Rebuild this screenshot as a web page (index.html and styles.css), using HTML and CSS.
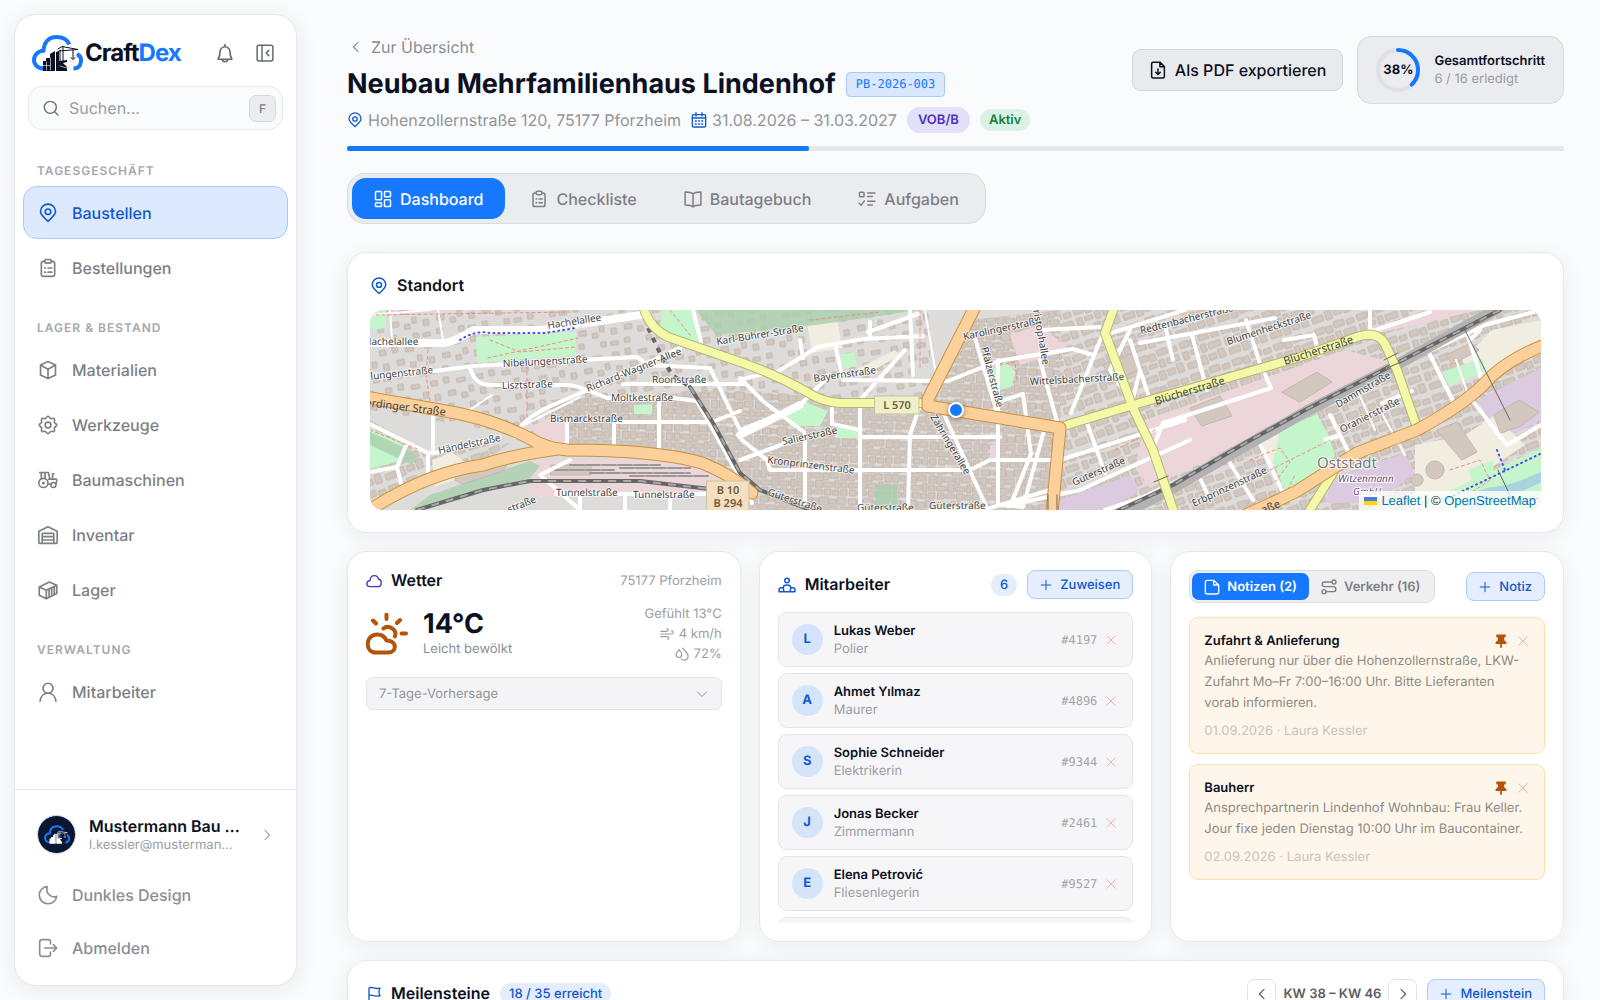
FILE: index.html
```html
<!DOCTYPE html>
<html lang="de">
<head>
<meta charset="utf-8">
<meta name="viewport" content="width=device-width, initial-scale=1">
<title>CraftDex – Neubau Mehrfamilienhaus Lindenhof</title>
<link rel="stylesheet" href="styles.css">
</head>
<body>
<svg class="sprite" aria-hidden="true">
  <symbol id="pin" viewBox="0 0 24 24"><path d="M12 22C8.500 18.500 3 14.800 3 10.300a9 9 0 0 1 18 0C21 14.800 15.500 18.500 12 22Z"/><circle cx="12" cy="10.500" r="3.300"/></symbol>
  <symbol id="clipboard" viewBox="0 0 24 24"><path d="M8 4H6.500A2.500 2.500 0 0 0 4 6.500v13A2.500 2.500 0 0 0 6.500 22h11a2.500 2.500 0 0 0 2.500-2.500v-13A2.500 2.500 0 0 0 17.500 4H16"/><path d="M8 4c0-1.200 1-2.200 2.200-2.200h3.600C15 1.800 16 2.800 16 4s-1 2.200-2.200 2.200h-3.600C9 6.200 8 5.200 8 4ZM8 12h1M12 12h4.500M8 17h1M12 17h4.500"/></symbol>
  <symbol id="box" viewBox="0 0 24 24"><path d="M12 1.800 21 6v12l-9 4.200L3 18V6ZM3.500 6.300 12 11l8.500-4.700M12 11v11"/></symbol>
  <symbol id="gear" viewBox="0 0 24 24"><path d="M12 1.500c1.500 0 1.800 2.300 3.300 2.800s3-1 4.200.2-.3 2.700.2 4.200 2.800 1.800 2.800 3.300-2.300 1.800-2.800 3.300 1 3-.2 4.200-2.700-.3-4.200.2-1.800 2.800-3.300 2.800-1.800-2.300-3.300-2.800-3 1-4.200-.2.300-2.700-.2-4.200S1.500 13.500 1.500 12s2.300-1.800 2.800-3.300-1-3 .2-4.200 2.700.3 4.200-.2S10.500 1.500 12 1.500Z"/><circle cx="12" cy="12" r="3.500"/></symbol>
  <symbol id="tractor" viewBox="0 0 24 24"><circle cx="6.500" cy="15.500" r="5.500"/><circle cx="6.500" cy="15.500" r=".8"/><circle cx="18.500" cy="18" r="3"/><path d="M2 3h10.500M4 3v7.500M8.500 3v6.800M12.500 3c.5 3 1 5 2 8M12 17h3.500M13 11h8.500q1 0 1 1.200L22 16M17.500 11V4.500h1.500"/></symbol>
  <symbol id="garage" viewBox="0 0 24 24"><path d="M1 21V7.500L12 2l11 5.500V21q0 1-1 1H2q-1 0-1-1Z"/><path d="M5 22V11q0-1 1-1h12q1 0 1 1v11M5 14h14M5 18h14"/></symbol>
  <symbol id="container" viewBox="0 0 24 24"><path d="m1.500 8.500 12-6 9 3.800v10L10 22.500l-8.500-4.300ZM1.500 8.500 10 12.300l12.500-6M10 12.300v10M13.300 11v8.500M16.400 9.500V18M19.500 8v8.500"/></symbol>
  <symbol id="user" viewBox="0 0 24 24"><circle cx="12" cy="7.500" r="6"/><path d="M2.500 23c.5-5.500 4-9.500 9.500-9.500s9 4 9.500 9.500"/></symbol>
  <symbol id="moon" viewBox="0 0 24 24"><path d="M11 2C5.500 2.300 1.500 6.500 1.500 12S6 22.500 12 22.500c5.500 0 9.800-3.700 10.500-9-5 2.500-14-2-11.500-11.500Z"/></symbol>
  <symbol id="logout" viewBox="0 0 24 24"><path d="M15 7V4.500A2.500 2.500 0 0 0 12.500 2H5a3 3 0 0 0-3 3v14a3 3 0 0 0 3 3h7.500a2.500 2.500 0 0 0 2.500-2.500V17M8 12h14.500M18.500 8l4 4-4 4"/></symbol>
  <symbol id="bell" viewBox="0 0 24 24"><path d="M4 18.500c2-2.500 2-4 2-8a6 6 0 0 1 12 0c0 4 0 5.500 2 8q.5 1-.5 1h-15q-1 0-.5-1ZM12 4.500V2M8.500 19.500c.5 4 6.500 4 7 0"/></symbol>
  <symbol id="collapse" viewBox="0 0 24 24"><rect x="1.500" y="1.500" width="21" height="21" rx="2.500"/><path d="M8 1.500v21M17 8.500 13.500 12l3.500 3.500"/></symbol>
  <symbol id="search" viewBox="0 0 24 24"><circle cx="11" cy="11" r="9"/><path d="m17.500 17.500 5 5"/></symbol>
  <symbol id="left" viewBox="0 0 24 24"><path d="m15.500 4-8 8 8 8"/></symbol>
  <symbol id="right" viewBox="0 0 24 24"><path d="m8.500 4 8 8-8 8"/></symbol>
  <symbol id="down" viewBox="0 0 24 24"><path d="m3 8 9 9 9-9"/></symbol>
  <symbol id="plus" viewBox="0 0 24 24"><path d="M12 2.500v19M2.500 12h19"/></symbol>
  <symbol id="close" viewBox="0 0 24 24"><path d="m2 2 20 20M22 2 2 22"/></symbol>
  <symbol id="calendar" viewBox="0 0 24 24"><rect x="2" y="4" width="20" height="18.500" rx="2"/><path d="M2 9h20M7.500 1v5M16.500 1v5M6.500 13.500h1.500M11.300 13.500h1.500M16 13.500h1.500M6.500 18h1.500M11.300 18h1.500M16 18h1.500"/></symbol>
  <symbol id="grid" viewBox="0 0 24 24"><rect x="2" y="2" width="8" height="11" rx="1"/><rect x="14" y="2" width="8" height="7" rx="1"/><rect x="2" y="17" width="8" height="5" rx="1"/><rect x="14" y="13" width="8" height="9" rx="1"/></symbol>
  <symbol id="book" viewBox="0 0 24 24"><path d="M12 5C10 3 7 2.500 1.500 2.500V20c5.500 0 8.500.5 10.500 2.500 2-2 5-2.500 10.500-2.500V2.500C17 2.500 14 3 12 5Zm0 0v17"/></symbol>
  <symbol id="tasks" viewBox="0 0 24 24"><rect x="2" y="3" width="6" height="6" rx="1"/><path d="m1.500 17.500 2.500 3 4.500-6M13 4h9.500M13 8.500h6M13 15h9.500M13 20h6"/></symbol>
  <symbol id="pdf" viewBox="0 0 24 24"><path d="M14.500 1.500H5.500a2 2 0 0 0-2 2v17a2 2 0 0 0 2 2h13a2 2 0 0 0 2-2V7.500Zm0 0v6h6M12 10.500v7M9 15l3 3 3-3"/></symbol>
  <symbol id="cloud" viewBox="0 0 24 24"><path d="M6 20.500c-3 0-4.700-2-4.700-4.300 0-2.600 2-4.600 4.700-4.700.2-4.500 3-7.500 6.700-7.500 3.300 0 5.300 2 6 5 2.700.8 4.200 3 4.200 5.500 0 3.500-2.400 6-5.900 6Z"/></symbol>
  <symbol id="partly" viewBox="0 0 42 42"><path d="M9.500 39.500c-4.600 0-7.800-3.600-7.800-8.500 0-5.800 4.400-9.600 9.600-9.600 4.400 0 7.500 2 9 6 4.700 0 8.500 2.500 8.500 6.300 0 3.300-2.600 5.800-6.300 5.800ZM17.500 15.500c5-4.300 14.500 1.500 11.300 7.800M20.500 1.500v4.500M7 7.500l3 3M34 7l-3 3M35.500 20.500H40"/></symbol>
  <symbol id="wind" viewBox="0 0 24 24"><path d="M1.500 7.500h9.500c4.500 0 3.500-5 .5-4.500M1.500 12h18c4.500 0 4-6 0-5.500M1.500 16.500h11c4 0 3 5 .5 4.500"/></symbol>
  <symbol id="drops" viewBox="0 0 24 24"><path d="M7 4.500C4 8 2 10.500 2 13c0 3.500 2.500 5 5 5s4.500-2 4.500-5S10 8 7 4.500ZM13 2c5 4.500 9.500 8.500 9.500 13.500S19 22.500 15 22.500c-2 0-3.500-.5-4.500-2"/></symbol>
  <symbol id="team" viewBox="0 0 24 24"><circle cx="12" cy="6" r="3"/><path d="M1.500 21v-3c0-1.700 1-2.500 2.500-2.500h1c1.500 0 2.500 1 2.500 2.500v3M16.500 21v-3c0-1.500 1-2.500 2.500-2.500h1c1.500 0 2.500.8 2.500 2.500v3M1.500 21h21M7 15.500c0-2.500 2-3.500 5-3.500s5 1 5 3.500"/></symbol>
  <symbol id="note" viewBox="0 0 24 24"><path d="M2 5a3 3 0 0 1 3-3h9.500L22 9v10.500a3 3 0 0 1-3 3H5a3 3 0 0 1-3-3ZM14.500 2v7H22"/></symbol>
  <symbol id="route" viewBox="0 0 24 24"><circle cx="19.500" cy="4.500" r="3"/><circle cx="4.500" cy="19" r="3"/><path d="M16.500 4.500H5.500c-5 0-5 7 0 7h13c5 0 5 7.500 0 7.500h-11"/></symbol>
  <symbol id="tack" viewBox="0 0 24 24"><path fill="currentColor" stroke="none" d="M4 1h16v5h-3l1 5.500c2 .8 3.500 2.500 3.500 5.500h-8v6l-1.500 1-1.500-1v-6h-8c0-3 1.500-4.700 3.500-5.500L7 6H4Z"/></symbol>
  <symbol id="flag" viewBox="0 0 24 24"><path d="M4.500 23V3c5-3 9.500 3 16.500 0-2 4-2 8 0 11.500-7 3-11.500-3-16.500 0"/></symbol>
  <symbol id="brand" viewBox="0 0 51 36">
    <path class="brand-cloud" d="M12 33.500C5.500 33.500 2 29.500 2 25c0-5 4-9 9.500-9.200C12 7 17 2 24.700 2 31 2 35.500 5 37.300 9.500M45 19c3.500 2 4.500 4.500 4 7.500-.6 4.500-3.600 7-7.500 7"/>
    <path class="brand-ink" d="M11 36V26h3v-3h4v-4l5-3v20ZM24 36V17l3-1v10l8-1v2l-4 1 4 4v4Z"/>
    <path class="brand-line" d="M26 14 30 11.500l16 3-19 1.500M31 12v14M28 15v12M41 15v8M39 22.500q2 4 4 0"/>
    <path class="brand-cut" d="M14.500 27v8M11 30.500h7M18.500 23v12M28 31l7 2"/>
  </symbol>
</svg>

<div class="app">
  <aside class="sidebar">
    <div class="brand-row">
      <a class="brand" href="#"><svg class="brand-mark"><use href="#brand"/></svg><span>Craft<b>Dex</b></span></a>
      <button class="plain" aria-label="Benachrichtigungen"><svg class="i20"><use href="#bell"/></svg></button>
      <button class="plain" aria-label="Seitenleiste einklappen"><svg class="i18"><use href="#collapse"/></svg></button>
    </div>
    <div class="search">
      <svg class="i16"><use href="#search"/></svg>
      <input type="text" placeholder="Suchen..." aria-label="Suchen">
      <kbd>F</kbd>
    </div>
    <nav class="nav">
      <h2>Tagesgeschäft</h2>
      <a class="active" href="#"><svg class="i20"><use href="#pin"/></svg>Baustellen</a>
      <a href="#"><svg class="i20"><use href="#clipboard"/></svg>Bestellungen</a>
      <h2>Lager &amp; Bestand</h2>
      <a href="#"><svg class="i20"><use href="#box"/></svg>Materialien</a>
      <a href="#"><svg class="i20"><use href="#gear"/></svg>Werkzeuge</a>
      <a href="#"><svg class="i20"><use href="#tractor"/></svg>Baumaschinen</a>
      <a href="#"><svg class="i20"><use href="#garage"/></svg>Inventar</a>
      <a href="#"><svg class="i20"><use href="#container"/></svg>Lager</a>
      <h2>Verwaltung</h2>
      <a href="#"><svg class="i20"><use href="#user"/></svg>Mitarbeiter</a>
    </nav>
    <div class="side-foot">
      <a class="profile" href="#">
        <span class="profile-pic"><svg><use href="#brand"/></svg></span>
        <span class="profile-text"><strong>Mustermann Bau GmbH</strong><small>l.kessler@mustermann-bau.de</small></span>
        <svg class="i14"><use href="#right"/></svg>
      </a>
      <button class="foot-item"><svg class="i20"><use href="#moon"/></svg>Dunkles Design</button>
      <button class="foot-item"><svg class="i20"><use href="#logout"/></svg>Abmelden</button>
    </div>
  </aside>

  <main class="main">
    <header class="head">
      <div class="head-info">
        <a class="back" href="#"><svg class="i14"><use href="#left"/></svg>Zur Übersicht</a>
        <div class="title-row"><h1>Neubau Mehrfamilienhaus Lindenhof</h1><code class="code">PB-2026-003</code></div>
        <div class="meta">
          <span class="meta-item"><svg class="i16"><use href="#pin"/></svg>Hohenzollernstraße 120, 75177 Pforzheim</span>
          <span class="meta-item"><svg class="i16"><use href="#calendar"/></svg>31.08.2026 – 31.03.2027</span>
          <span class="tag violet">VOB/B</span>
          <span class="tag green">Aktiv</span>
        </div>
      </div>
      <div class="head-actions">
        <button class="export"><svg class="i18"><use href="#pdf"/></svg>Als PDF exportieren</button>
        <div class="total">
          <div class="ring">
            <svg viewBox="0 0 44 44"><circle class="ring-track" cx="22" cy="22" r="20"/><circle class="ring-value" cx="22" cy="22" r="20" pathLength="100" stroke-dasharray="38 100"/></svg>
            <span>38%</span>
          </div>
          <div class="total-text"><strong>Gesamtfortschritt</strong><span>6 / 16 erledigt</span></div>
        </div>
      </div>
    </header>
    <div class="bar"><div class="bar-fill" style="width:38%"></div></div>

    <div class="tabs" role="tablist">
      <button class="on" role="tab" aria-selected="true"><svg class="i18"><use href="#grid"/></svg>Dashboard</button>
      <button role="tab"><svg class="i18"><use href="#clipboard"/></svg>Checkliste</button>
      <button role="tab"><svg class="i18"><use href="#book"/></svg>Bautagebuch</button>
      <button role="tab"><svg class="i18"><use href="#tasks"/></svg>Aufgaben</button>
    </div>

    <section class="card site">
      <h2 class="card-title blue"><svg class="i18"><use href="#pin"/></svg>Standort</h2>
      <div class="map">
        <svg class="map-art" viewBox="0 0 1171 200" preserveAspectRatio="xMidYMid slice" role="img" aria-label="Karte von Pforzheim">
          <defs>
            <pattern id="houses" width="46" height="38" patternUnits="userSpaceOnUse" patternTransform="rotate(-9)">
              <path class="bld" d="M3 4h6v5H3ZM16 2h5v6h-5ZM29 5h8v4h-8ZM40 14h4v6h-4ZM5 18h5v6H5ZM19 16h7v5h-7ZM32 20h5v5h-5ZM3 31h7v4H3ZM17 29h5v5h-5ZM39 30h5v5h-5Z"/>
            </pattern>
            <pattern id="blocks" width="44" height="34" patternUnits="userSpaceOnUse" patternTransform="rotate(2)">
              <path class="bld" d="M1 2h8v6H1ZM9 3h6v4H9ZM16 1h9v8h-9ZM26 3h7v5h-7ZM34 1h8v7h-8ZM1 10h5v8H1ZM8 11h9v5H8ZM19 11h5v7h-5ZM26 10h8v6h-8ZM37 10h6v8h-6ZM1 20h9v5H1ZM12 18h6v8h-6ZM20 20h9v5h-9ZM31 18h4v8h-4ZM37 20h6v5h-6ZM2 27h6v6H2ZM10 28h9v4h-9ZM21 27h6v6h-6ZM29 28h6v5h-6ZM37 27h6v6h-6Z"/>
            </pattern>
            <pattern id="slant" width="44" height="34" patternUnits="userSpaceOnUse" patternTransform="rotate(-20)">
              <path class="bld" d="M1 2h9v6H1ZM12 3h6v7h-6ZM21 1h10v6H21ZM34 3h7v5h-7ZM1 12h5v8H1ZM9 13h8v4H9ZM20 11h5v8h-5ZM28 12h12v6H28ZM2 24h11v6H2ZM16 22h6v9h-6ZM25 23h7v6h-7ZM35 21h6v9h-6Z"/>
            </pattern>
          </defs>
          <rect class="area" width="1171" height="200" fill="#dedcda"/>
          <path class="area" fill="url(#houses)" d="M0 0h560v95L370 80 330 95 180 130 0 100Z"/>
          <path class="area" fill="url(#blocks)" d="M180 90l190-10 190 15h130v105H370L330 150 180 135ZM600 10l90-10v120l-130-30Z"/>
          <path class="area" fill="url(#slant)" d="M690 0h481v200H690ZM0 110l60 35 90-20-40 30L0 195Z"/>
          <path class="pink" d="M160 118l25-15 12 10v20l-20 2ZM640 25l30-10 30 25-50 15ZM1000 25 1110 0H1060L1000 20ZM775 110l200-70 30 8 15 5-140 75-100 50-15-20ZM162 150h150l50 22-10 15H160ZM620 135h7v15h-7Z"/>
          <path class="purple" d="M1107 90 1171 58v52l-38 20ZM690 190l70-25 10 15-30 20h-55ZM965 168l70-25 10 20-40 30h-50Z"/>
          <path class="sand" d="M1045 135l50-10 30-20 30 30-60 40-50 20ZM1092 50l30-30 49-10v30l-60 30ZM437 13l30-5 5 30-30 5ZM485 60l40-20 5 5-35 20ZM62 150l20-8 25 20-42 15ZM888 128l19-8 18 28-25 10Z"/>
          <path class="park" d="M106 27l100-5v23l-99 8ZM293 0h32l5 30-20 8-22-15ZM0 0h16v18L0 20ZM0 118l35 18-5 15-30 8ZM415 105l18-14 25 10-8 15h-30ZM465 118h25v10h-25ZM620 60l16-8 10 10-5 15-18 5ZM470 45l14-3 3 14-14 3ZM910 120l37-16 12 22 6 20-48 40-14-34ZM264 95l18-1v10h-18ZM1072 62l40-14 4 13-37 15ZM1098 160l25-10v15l-20 8ZM1060 190l111-52v62h-120Z"/>
          <path class="wood" d="M326 0h220l-30 5-70 10-40 4-60 6ZM0 122l40 18 10 10-10 4L0 135ZM40 200l20-15 100-34 10 5-10 12-70 22ZM505 175h22v25h-22Z"/>
          <path class="bld" d="M88 162l40-14 10 5-5 8-40 13-8-4ZM912 82l35-20 15 10-32 20ZM1067 120l20-8 20 30-15 8ZM1124 105l25-15 20 12-20 15-18 6ZM1076 45l25-12 8 7-26 14ZM181 155h40v10h-40ZM820 98l30-12 12 20-30 10ZM733 55l30-12 10 15-28 12Z"/>
          <circle class="bld" cx="1065" cy="160" r="9"/><circle class="bld" cx="1047" cy="170" r="6"/>
          <path class="water" d="M1090 200c8-20 25-22 40-24 16-2 28-9 41-14v10c-20 12-40 14-60 28Z"/>
          <path class="yard" d="M184 160h60M200 155h90M220 163h100M250 158h70M260 166h80"/>
          <g class="st thin"><path d="M0 5 60 0M20 0l2 30M68 0l5 30M150 117l60-30M92 105l30-20M555 0l12 70M1100 90l-14-40M1010 100l25 45M985 75l20 45"/></g>
          <g class="st">
            <path class="wide" d="M0 33h73q10 0 30-13H170L270 5M370 125l60-30"/>
            <path d="M0 66 57 62 103 56 267 47 278 55 340 58M100 58q5 17 20 17h77q10 0 40 13h66l24 3 40 72 15 30M197 89 310 38M253 74H375M247 112h96M197 113v25M244 110v28M289 90v48M145 127q5-20 52-38M0 114l58 29h7l65-16M58 143v30M63 97v45M37 133l-10 24-27 5M27 157l5 20M323 0l8 32M340 58l30 62 20-8M210 200l-40-35 30-15M186 184h180M210 184v16M255 184v16M300 184v16M340 113l30-12M370 70l30-8M430 95l30-30M370 68l24 24 40 30M402 65l46-28 45-8 60-3M430 30l3 18M466 38l7 32 105 1 50-20 75-12 20 6M540 0l3 65M498 22l50-18M500 25V12M535 40l-45 50v110M462 94v20l28 6M490 127H630M435 125v75M370 150l60-22M372 130l25 20L400 160H600M550 95l-10 30-2 75M572 100l45 98M628 50v145l25 2 22-80M605 28l25 85M670 50l18 65M600 160l20-10h70M627 92l26-8 8 60-20 50M731 28l-30 75M670 20l60-3M640 195l70-15 110-50M690 150l125-40M717 113l18 50M560 200l60-2 60-18M770 33 905 8M760 30l20 60M795 15l8 35M822 25l15 55M876 10l16 50M893 60l8 18-108 35-10 25M914 30l30-5 5 20M735 25l80-25M1000 0v20M1000 22l60-20M770 60l-7 28M763 95 740 60l20-40"/>
            <path d="M735 200l36-12 118-56 26 55M826 160l12 25M858 150l25 40M890 130l140-75 85-40 56-15M1060 45l25 50M1096 20l16 50-10 20 35 45 34-20M1012 93l30-12M960 105l20 40M955 130l12-4M1100 30l10-10"/>
          </g>
          <path class="foot" d="M58 40l-2 25 5 32M157 50v60M118 48l90-20M120 30l30 12 56-5M0 120l50 20M300 0l20 25M880 150l30-12 10 14-15 20M900 160l60-30M915 185l10-20M1080 160l30-10 10 20-30 20M550 0v60M630 55l15-3 2 18M0 5l200-3M440 10l70-8M745 140l40-20"/>
          <path class="cycle" d="M90 30q15-10 30-7h55l30-5M1070 192l100-48M1127 140l8 20M1157 192l14-5"/>
          <path class="rail-bed" d="M1125 0 1023 57 937 101 877 135 803 178 757 202"/>
          <path class="rail" d="M47 200l66-20 47-9h110l70 8M320 77l23 36 27 50 20 17 60 24M1130 0 1023 55 937 99 877 132 803 175 747 201"/>
          <path class="rail-dash" d="M47 200l66-20 47-9h110l70 8M320 77l23 36 27 50 20 17 60 24M1130 0 1023 55 937 99 877 132 803 175 747 201"/>
          <path class="tunnel" d="M278 18l12 25 12 22 18 12"/>
          <g class="y-case"><path id="y1" d="M273-5q5 22 25 32l72 25q35 12 67 30 15 10 33 11h85"/><path id="y2" d="M690 117l80-24 160-46 60-21q18-5 25 8l12 26 18 52"/><path id="y3" d="M745-5l-10 28 28 75 20 42 22 65M963 163l-25 40"/></g>
          <g class="y-fill"><use href="#y1"/><use href="#y2"/><use href="#y3"/></g>
          <g class="o-case"><path id="o1" d="M-5 87l75 13q50 8 87 27 20 12 40 13 90 0 135 13 30 12 50 30M-5 203q60-40 118-48 30-10 75-16"/><path id="o2" d="M606-5l-48 94v7l132 22-8 85"/><path id="o3" d="M1175 35q-40 15-62 40-20 20-66 45l-60 23-60 38q-30 15-50 23"/></g>
          <g class="o-fill"><use href="#o1"/><use href="#o2"/><use href="#o3"/></g>
          <path class="bridge" d="M1014 50l14-7M1017 58l14-6M784 172l14-6M1128 160l18 38M678 185v15M687 185v15M1095 20l45 90"/>
          <g class="shield"><rect x="505" y="86" width="44" height="18" fill="#eef0c8"/><text x="527" y="99" text-anchor="middle">L 570</text></g>
          <g class="shield"><rect x="337" y="171" width="42" height="34" fill="#f6dfc0"/><text x="358" y="184" text-anchor="middle">B 10</text><text x="358" y="197" text-anchor="middle">B 294</text></g>
          <g class="lbl">
            <text transform="translate(-6 35)">Hachelallee</text><text transform="translate(178 19) rotate(-9)">Hachelallee</text>
            <text transform="translate(-21 72) rotate(-6)">Nibelungenstraße</text><text transform="translate(133 57) rotate(-3)">Nibelungenstraße</text>
            <text transform="translate(132 79) rotate(-2)">Lisztstraße</text><text transform="translate(218 82) rotate(-22)">Richard-Wagner-Allee</text>
            <text transform="translate(282 73)">Roonstraße</text><text transform="translate(241 91)">Moltkestraße</text><text transform="translate(180 112)">Bismarckstraße</text>
            <text transform="translate(69 144) rotate(-12)">Händelstraße</text><text transform="translate(186 186)">Tunnelstraße</text><text transform="translate(263 188)">Tunnelstraße</text>
            <text transform="translate(139 203) rotate(-22)">straße</text><text transform="translate(347 35) rotate(-9)">Karl-Bührer-Straße</text>
            <text transform="translate(444 72) rotate(-8)">Bayernstraße</text><text transform="translate(413 135) rotate(-12)">Salierstraße</text><text transform="translate(397 153) rotate(7)">Kronprinzenstraße</text>
            <text transform="translate(397 185) rotate(18)">Güterstraße</text><text transform="translate(487 201)">Güterstraße</text><text transform="translate(559 199)">Güterstraße</text>
            <text transform="translate(560 107) rotate(59)">Zähringerallee</text><text transform="translate(594 30) rotate(-12)">Karolingerstraße</text><text transform="translate(611 38) rotate(75)">Pfälzerstraße</text>
            <text transform="translate(661 -12) rotate(80)">Christophallee</text><text transform="translate(660 75) rotate(-3)">Wittelsbacherstraße</text><text transform="translate(704 176) rotate(-24)">Güterstraße</text>
            <text transform="translate(771 24) rotate(-14)">Redtenbacherstraße</text><text transform="translate(858 35) rotate(-18)">Blumenheckstraße</text>
            <text transform="translate(968 98) rotate(-30)">Dammstraße</text><text transform="translate(972 123) rotate(-27)">Oranierstraße</text><text transform="translate(824 197) rotate(-25)">Erbprinzenstraße</text>
          </g>
          <g class="lbl major"><text transform="translate(-5 96) rotate(7)">erdinger Straße</text><text transform="translate(786 95) rotate(-17)">Blücherstraße</text><text transform="translate(915 55) rotate(-18)">Blücherstraße</text><text transform="translate(893 204) rotate(-22)">aße</text></g>
          <text class="place" x="947" y="158">Oststadt</text>
          <g class="firm"><text x="968" y="172">Witzenmann</text><text x="983" y="185">GmbH</text></g>
        </svg>
        <span class="marker"></span>
        <div class="credit"><span class="ua"></span><a href="#">Leaflet</a> | © <a href="#">OpenStreetMap</a></div>
      </div>
    </section>

    <div class="cols">
      <section class="card">
        <div class="weather-head"><h2 class="card-title violet-icon"><svg class="i16"><use href="#cloud"/></svg>Wetter</h2><span class="muted">75177 Pforzheim</span></div>
        <div class="weather">
          <svg class="sun"><use href="#partly"/></svg>
          <div class="temp"><strong>14°C</strong><span>Leicht bewölkt</span></div>
          <div class="facts"><span>Gefühlt 13°C</span><span><svg class="i14"><use href="#wind"/></svg>4 km/h</span><span><svg class="i14"><use href="#drops"/></svg>72%</span></div>
        </div>
        <button class="forecast">7-Tage-Vorhersage<svg class="i12"><use href="#down"/></svg></button>
      </section>

      <section class="card staff">
        <div class="card-head"><h2 class="card-title blue"><svg class="i18"><use href="#team"/></svg>Mitarbeiter</h2><span class="count">6</span><button class="add"><svg class="i12"><use href="#plus"/></svg>Zuweisen</button></div>
        <ul class="people">
          <li><span class="avatar">L</span><div class="who"><strong>Lukas Weber</strong><span>Polier</span></div><code>#4197</code><button class="x" aria-label="Entfernen"><svg><use href="#close"/></svg></button></li>
          <li><span class="avatar">A</span><div class="who"><strong>Ahmet Yılmaz</strong><span>Maurer</span></div><code>#4896</code><button class="x" aria-label="Entfernen"><svg><use href="#close"/></svg></button></li>
          <li><span class="avatar">S</span><div class="who"><strong>Sophie Schneider</strong><span>Elektrikerin</span></div><code>#9344</code><button class="x" aria-label="Entfernen"><svg><use href="#close"/></svg></button></li>
          <li><span class="avatar">J</span><div class="who"><strong>Jonas Becker</strong><span>Zimmermann</span></div><code>#2461</code><button class="x" aria-label="Entfernen"><svg><use href="#close"/></svg></button></li>
          <li><span class="avatar">E</span><div class="who"><strong>Elena Petrović</strong><span>Fliesenlegerin</span></div><code>#9527</code><button class="x" aria-label="Entfernen"><svg><use href="#close"/></svg></button></li>
          <li></li>
        </ul>
      </section>

      <section class="card">
        <div class="notes-head">
          <div class="seg"><button class="on"><svg class="i16"><use href="#note"/></svg>Notizen (2)</button><button><svg class="i16"><use href="#route"/></svg>Verkehr (16)</button></div>
          <button class="add"><svg class="i12"><use href="#plus"/></svg>Notiz</button>
        </div>
        <div class="notes">
          <article class="note">
            <div class="note-top"><h3>Zufahrt &amp; Anlieferung</h3><button class="tack" aria-label="Angeheftet"><svg><use href="#tack"/></svg></button><button class="x" aria-label="Löschen"><svg><use href="#close"/></svg></button></div>
            <p>Anlieferung nur über die Hohenzollernstraße, LKW-Zufahrt Mo–Fr 7:00–16:00 Uhr. Bitte Lieferanten vorab informieren.</p>
            <footer>01.09.2026 · Laura Kessler</footer>
          </article>
          <article class="note">
            <div class="note-top"><h3>Bauherr</h3><button class="tack" aria-label="Angeheftet"><svg><use href="#tack"/></svg></button><button class="x" aria-label="Löschen"><svg><use href="#close"/></svg></button></div>
            <p>Ansprechpartnerin Lindenhof Wohnbau: Frau Keller. Jour fixe jeden Dienstag 10:00 Uhr im Baucontainer.</p>
            <footer>02.09.2026 · Laura Kessler</footer>
          </article>
        </div>
      </section>
    </div>

    <section class="card">
      <div class="card-head">
        <h2 class="card-title blue"><svg class="i16"><use href="#flag"/></svg>Meilensteine</h2><span class="pill">18 / 35 erreicht</span>
        <div class="weeks"><button class="step" aria-label="Zurück"><svg class="i14"><use href="#left"/></svg></button><span>KW 38 – KW 46</span><button class="step" aria-label="Weiter"><svg class="i14"><use href="#right"/></svg></button></div>
        <button class="add"><svg class="i12"><use href="#plus"/></svg>Meilenstein</button>
      </div>
    </section>
  </main>
</div>
</body>
</html>
```
FILE: styles.css
```css
* { box-sizing: border-box; }
:root {
  --ink: #0b1022;
  --grey: #7c7f85;
  --soft: #9b9da2;
  --blue: #1677ff;
  --deep: #1259cf;
  --line: #e6e8eb;
  --panel: #ebecef;
  --small: 13px;
  --mono: "DejaVu Sans Mono", monospace;
}
body {
  margin: 0;
  background: #fafbfd;
  color: var(--ink);
  font: 16px/24px Inter, "Liberation Sans", sans-serif;
  text-rendering: geometricPrecision;
}
h1, h2, h3, p, ul { margin: 0; padding: 0; }
button, input { font: inherit; color: inherit; margin: 0; text-rendering: inherit; }
button { background: none; border: 0; padding: 0; cursor: pointer; }
a { color: inherit; text-decoration: none; }
svg { flex: none; fill: none; stroke: currentColor; stroke-width: 2; stroke-linecap: round; stroke-linejoin: round; display: block; }
.sprite { position: absolute; width: 0; height: 0; }
.i12 { width: 12px; height: 12px; }
.i14 { width: 14px; height: 14px; }
.i16 { width: 16px; height: 16px; }
.i18 { width: 18px; height: 18px; }
.i20 { width: 20px; height: 20px; }

.app { display: flex; height: 100vh; overflow: hidden; }

/* Sidebar */
.sidebar {
  flex: none;
  display: flex;
  flex-direction: column;
  width: 283px;
  margin: 14px;
  margin-right: 0;
  background: #fff;
  border: 1px solid var(--line);
  border-radius: 22px;
  box-shadow: 0 4px 24px rgba(15, 23, 42, .07);
}
.brand-row { display: flex; align-items: center; gap: 21px; padding: 20px 22px 0 17px; }
.brand { flex: 1; display: flex; align-items: center; gap: 2px; font-size: 24px; font-weight: 700; line-height: 36px; letter-spacing: -1px; }
.brand b { color: var(--blue); font-weight: 700; }
.brand-mark { width: 51px; height: 36px; }
.brand-cloud { stroke: var(--blue); stroke-width: 4; stroke-linecap: butt; }
.brand-ink { fill: currentColor; stroke: none; }
.brand-line { stroke: currentColor; stroke-width: 1; }
.brand-cut { stroke: #fff; stroke-width: 1; opacity: .6; }
.plain { color: #666a70; }
.search {
  display: flex;
  align-items: center;
  gap: 8px;
  height: 44px;
  margin: 15px 13px 0;
  padding: 0 6px 0 14px;
  border: 1px solid var(--line);
  border-radius: 14px;
  background: #fafbfd;
  color: #6d7177;
}
.search input { flex: 1; min-width: 0; border: 0; padding: 0 2px; background: none; outline: 0; }
.search input::placeholder { color: var(--soft); opacity: 1; }
kbd { width: 27px; height: 27px; border: 1px solid #d6d8dc; border-radius: 7px; background: var(--panel); color: var(--grey); font: 500 12px/25px Inter, sans-serif; text-align: center; }
.nav { flex: 1; display: flex; flex-direction: column; gap: 2px; padding: 9px 8px 0; }
.nav h2 { margin: 24px 14px 5px; color: #a6a8ac; font-size: 12px; line-height: 16px; font-weight: 600; letter-spacing: 1px; text-transform: uppercase; }
.nav a, .foot-item {
  display: flex;
  align-items: center;
  gap: 14px;
  height: 53px;
  padding: 0 14px;
  border: 1px solid transparent;
  border-radius: 14px;
  color: var(--grey);
  font-weight: 500;
}
.nav .active { background: #dce9fe; border-color: #a9cbfb; color: var(--deep); }
.side-foot { display: flex; flex-direction: column; padding: 11px 8px; border-top: 1px solid var(--line); }
.foot-item { color: #8b8e93; }
.profile { display: flex; align-items: center; gap: 13px; height: 67px; padding: 0 14px; color: #a9abaf; }
.profile-pic { display: grid; place-items: center; width: 39px; height: 39px; border-radius: 50%; background: #0b1730; border: 1px solid #cfe3f5; color: #fff; }
.profile-pic svg { width: 26px; height: 19px; }
.profile-text { flex: 1; min-width: 0; }
.profile-text strong, .profile-text small { display: block; overflow: hidden; white-space: nowrap; text-overflow: ellipsis; }
.profile-text strong { color: var(--ink); font-weight: 600; line-height: 20px; }
.profile-text small { padding-right: 8px; color: var(--soft); font-size: var(--small); line-height: 18px; }

/* Page */
.main { flex: 1; min-width: 0; padding: 36px 36px 36px 50px; overflow-y: auto; scrollbar-width: none; }
.head { display: flex; justify-content: space-between; align-items: flex-start; gap: 24px; }
.back { display: flex; align-items: center; gap: 8px; height: 22px; padding-left: 2px; line-height: 22px; color: #8b8e93; }
.title-row { display: flex; align-items: center; gap: 10px; height: 36px; margin-top: 8px; }
h1 { font-size: 27px; line-height: 36px; font-weight: 700; }
.code { height: 25px; padding: 0 9px; border: 1px solid #a5cbfa; border-radius: 4px; background: #d9e8fc; color: var(--blue); font: 12px/23px var(--mono); }
.meta { display: flex; align-items: center; gap: 10px; height: 28px; margin-top: 4px; color: #929499; }
.meta-item { display: flex; align-items: center; gap: 5px; }
.meta-item svg { color: var(--deep); }
.tag { padding: 0 11px; border-radius: 13px; font-size: var(--small); line-height: 26px; font-weight: 600; }
.violet { background: #e3e0fa; color: #4b32c3; }
.green { padding: 0 9px; background: #d9f2e3; color: #178040; line-height: 22px; }
.head-actions { display: flex; align-items: center; gap: 14px; }
.export { display: flex; align-items: center; gap: 8px; height: 42px; padding: 0 16px; border: 1px solid #d3d5d9; border-radius: 9px; background: #e8eaed; font-weight: 500; }
.total { display: flex; align-items: center; gap: 14px; height: 68px; padding: 0 18px; border: 1px solid #d8dadd; border-radius: 14px; background: var(--panel); }
.ring { display: grid; place-items: center; width: 44px; height: 44px; }
.ring > * { grid-area: 1 / 1; }
.ring svg { width: 44px; height: 44px; transform: rotate(-90deg); stroke-width: 4; }
.ring-track { stroke: #dfe1e4; }
.ring-value { stroke: var(--blue); }
.ring span { font-size: var(--small); font-weight: 700; }
.total-text { display: flex; flex-direction: column; font-size: var(--small); line-height: 18px; }
.total-text strong { font-weight: 600; }
.total-text span { color: var(--soft); }
.bar { height: 5px; margin-top: 12px; background: #e6e7ea; border-radius: 2px; }
.bar-fill { height: 5px; background: var(--blue); border-radius: 2px; }
.tabs { display: flex; gap: 3px; width: fit-content; margin: 22px 0 28px; padding: 4px; border: 1px solid #d9dbdf; border-radius: 18px; background: var(--panel); }
.tabs button { display: flex; align-items: center; gap: 8px; height: 41px; padding: 0 22px; border-radius: 14px; color: var(--grey); font-weight: 500; }
.tabs .on { background: var(--blue); color: #fff; }

.card { padding: 18px; border: 1px solid var(--line); border-radius: 20px; background: #fff; box-shadow: 0 4px 24px rgba(15, 23, 42, .06); margin-bottom: 18px; }
.card-title { display: flex; align-items: center; gap: 9px; font-size: 16px; line-height: 21px; font-weight: 600; }
.blue svg { color: var(--deep); }
.violet-icon svg { color: #4b32c3; }
.muted { color: var(--soft); font-size: var(--small); }
.site { padding: 22px; }
.cols { display: grid; grid-template-columns: repeat(3, minmax(0, 1fr)); gap: 18px; margin-bottom: 18px; }
.cols .card { margin: 0; }

/* Map */
.map { position: relative; height: 200px; margin-top: 14px; border-radius: 14px; overflow: hidden; background: #dedcda; }
.map-art { width: 100%; height: 200px; }
.map-art .area { stroke: none; }
.map-art .bld { fill: #d3c8c0; stroke: #c2b6ad; stroke-width: 1; }
.pink { fill: #ecd6da; stroke: none; }
.purple { fill: #dccbe0; stroke: none; }
.sand { fill: #f1ede0; stroke: none; }
.park { fill: #c5f5cb; stroke: none; }
.wood { fill: #a9cfac; stroke: none; opacity: .8; }
.water { fill: #aad3df; stroke: none; }
.yard { stroke: #999; stroke-width: 2; stroke-dasharray: 14 2; }
.st { stroke: #fff; stroke-width: 4; }
.thin { stroke-width: 2; }
.wide { stroke-width: 8; }
.foot { stroke: #f58b80; stroke-width: 1; stroke-dasharray: 3 3; }
.cycle { stroke: #4b4bf0; stroke-width: 2; stroke-dasharray: 1 4; }
.rail-bed { stroke: #b3b1b1; stroke-width: 11; stroke-dasharray: 30 2; }
.rail { stroke: #666; stroke-width: 4; }
.rail-dash { stroke: #aaa; stroke-width: 2; stroke-dasharray: 8 7; stroke-linecap: butt; }
.tunnel { stroke: #666; stroke-width: 4; stroke-dasharray: 5 6; stroke-linecap: butt; }
.y-case { stroke: #b5b77a; stroke-width: 10; }
.y-fill { stroke: #f5f8a6; stroke-width: 8; }
.o-case { stroke: #c9923f; stroke-width: 13; }
.o-fill { stroke: #fcd09a; stroke-width: 11; }
.bridge { stroke: #666; stroke-width: 1; }
.map-art text { font-family: "Noto Sans", sans-serif; }
.shield rect { stroke: #c9c3a0; stroke-width: 1; }
.shield text { fill: #6b5c3a; stroke: none; font-size: 11px; font-weight: 600; }
.lbl text { font-size: 10px; fill: #444; stroke: rgba(255, 255, 255, .7); stroke-width: 2; paint-order: stroke; }
.major text { font-size: 11px; stroke: none; }
.place { font-size: 15px; fill: #777; stroke: #fff; stroke-width: 2; paint-order: stroke; }
.firm text { font-size: 10px; font-style: italic; fill: #734a76; stroke: #fff; stroke-width: 2; paint-order: stroke; }
.marker { position: absolute; left: 50%; top: 50%; width: 16px; height: 16px; margin: -8px; border: 2px solid #fff; border-radius: 50%; background: var(--blue); box-shadow: 0 1px 5px rgba(0, 0, 0, .4); }
.credit { position: absolute; right: 0; bottom: 0; padding: 0 5px; background: rgba(255, 255, 255, .8); color: #333; font: 13px/19px "Liberation Sans", Arial, sans-serif; white-space: nowrap; }
.credit a { color: #0078a8; }
.ua { display: inline-block; width: 13px; height: 8px; margin-right: 4px; background: linear-gradient(#4c7be1 50%, #ffd500 50%); }

/* Weather */
.weather-head { display: flex; justify-content: space-between; align-items: center; height: 21px; }
.weather { display: flex; align-items: center; gap: 15px; height: 62px; margin: 12px 0; }
.sun { width: 42px; height: 42px; color: #b4540a; stroke-width: 4; }
.temp { flex: 1; display: flex; flex-direction: column; }
.temp strong { font-size: 27px; line-height: 30px; font-weight: 700; }
.temp span { font-size: var(--small); line-height: 20px; color: #8b8e93; }
.facts { display: flex; flex-direction: column; align-items: flex-end; color: var(--soft); font-size: var(--small); line-height: 20px; }
.facts span { display: flex; align-items: center; gap: 5px; }
.forecast { display: flex; align-items: center; justify-content: space-between; width: 100%; height: 33px; padding: 0 13px 0 12px; border: 1px solid #e3e4e7; border-radius: 7px; background: #f4f4f6; color: #929499; font-size: var(--small); }

/* Staff */
.card-head { display: flex; align-items: center; gap: 10px; height: 29px; }
.staff .card-title { flex: 1; }
.add { display: flex; align-items: center; gap: 8px; height: 29px; padding: 0 12px; border: 1px solid #a9cbfb; border-radius: 8px; background: #e4eefe; color: var(--deep); font-size: var(--small); line-height: 20px; font-weight: 500; }
.count, .pill { padding: 0 9px; border-radius: 11px; background: #e4ecfd; color: var(--deep); font-size: var(--small); line-height: 22px; font-weight: 500; }
.people { display: flex; flex-direction: column; gap: 6px; height: 311px; margin-top: 13px; overflow: hidden; list-style: none; }
.people li { flex: none; display: flex; align-items: center; height: 55px; padding: 0 16px 0 13px; border: 1px solid #e4e5e8; border-radius: 9px; background: #f6f6f8; }
.avatar { width: 31px; height: 31px; border-radius: 50%; background: #d5e4f9; color: var(--deep); font-size: var(--small); line-height: 31px; font-weight: 700; text-align: center; }
.who { flex: 1; display: flex; flex-direction: column; margin-left: 11px; font-size: var(--small); line-height: 18px; }
.who strong { font-weight: 600; }
.who span { color: var(--soft); }
.people code { margin-right: 9px; color: #a3a5a9; font: 12px/18px var(--mono); }
.x { color: #e9a0a0; }
.x svg { width: 10px; height: 10px; }

/* Notes */
.notes-head { display: flex; align-items: center; justify-content: space-between; height: 33px; }
.seg { display: flex; padding: 2px; border: 1px solid #dcdde0; border-radius: 9px; background: #efeff1; }
.seg button { display: flex; align-items: center; gap: 7px; height: 27px; padding: 0 12px; border-radius: 7px; color: var(--grey); font-size: var(--small); font-weight: 600; }
.seg .on { background: var(--blue); color: #fff; }
.notes { display: flex; flex-direction: column; gap: 10px; margin-top: 14px; }
.note { padding: 12px 14px; border: 1px solid #fadfa9; border-radius: 9px; background: #fef6ea; font-size: var(--small); }
.note-top { display: flex; align-items: center; gap: 10px; height: 21px; padding-right: 2px; }
.note h3 { flex: 1; font-size: var(--small); font-weight: 600; }
.note p { color: #8f8a84; line-height: 21px; }
.note footer { margin-top: 7px; color: #c9c4bd; line-height: 20px; }
.tack { color: #b4540a; }
.tack svg { width: 14px; height: 14px; }

/* Milestones */
.weeks { display: flex; align-items: center; gap: 7px; margin-left: auto; color: #5b5e64; font-size: var(--small); font-weight: 600; }
.step { display: grid; place-items: center; width: 29px; height: 29px; border: 1px solid #e0e2e5; border-radius: 7px; background: #fff; }
```
